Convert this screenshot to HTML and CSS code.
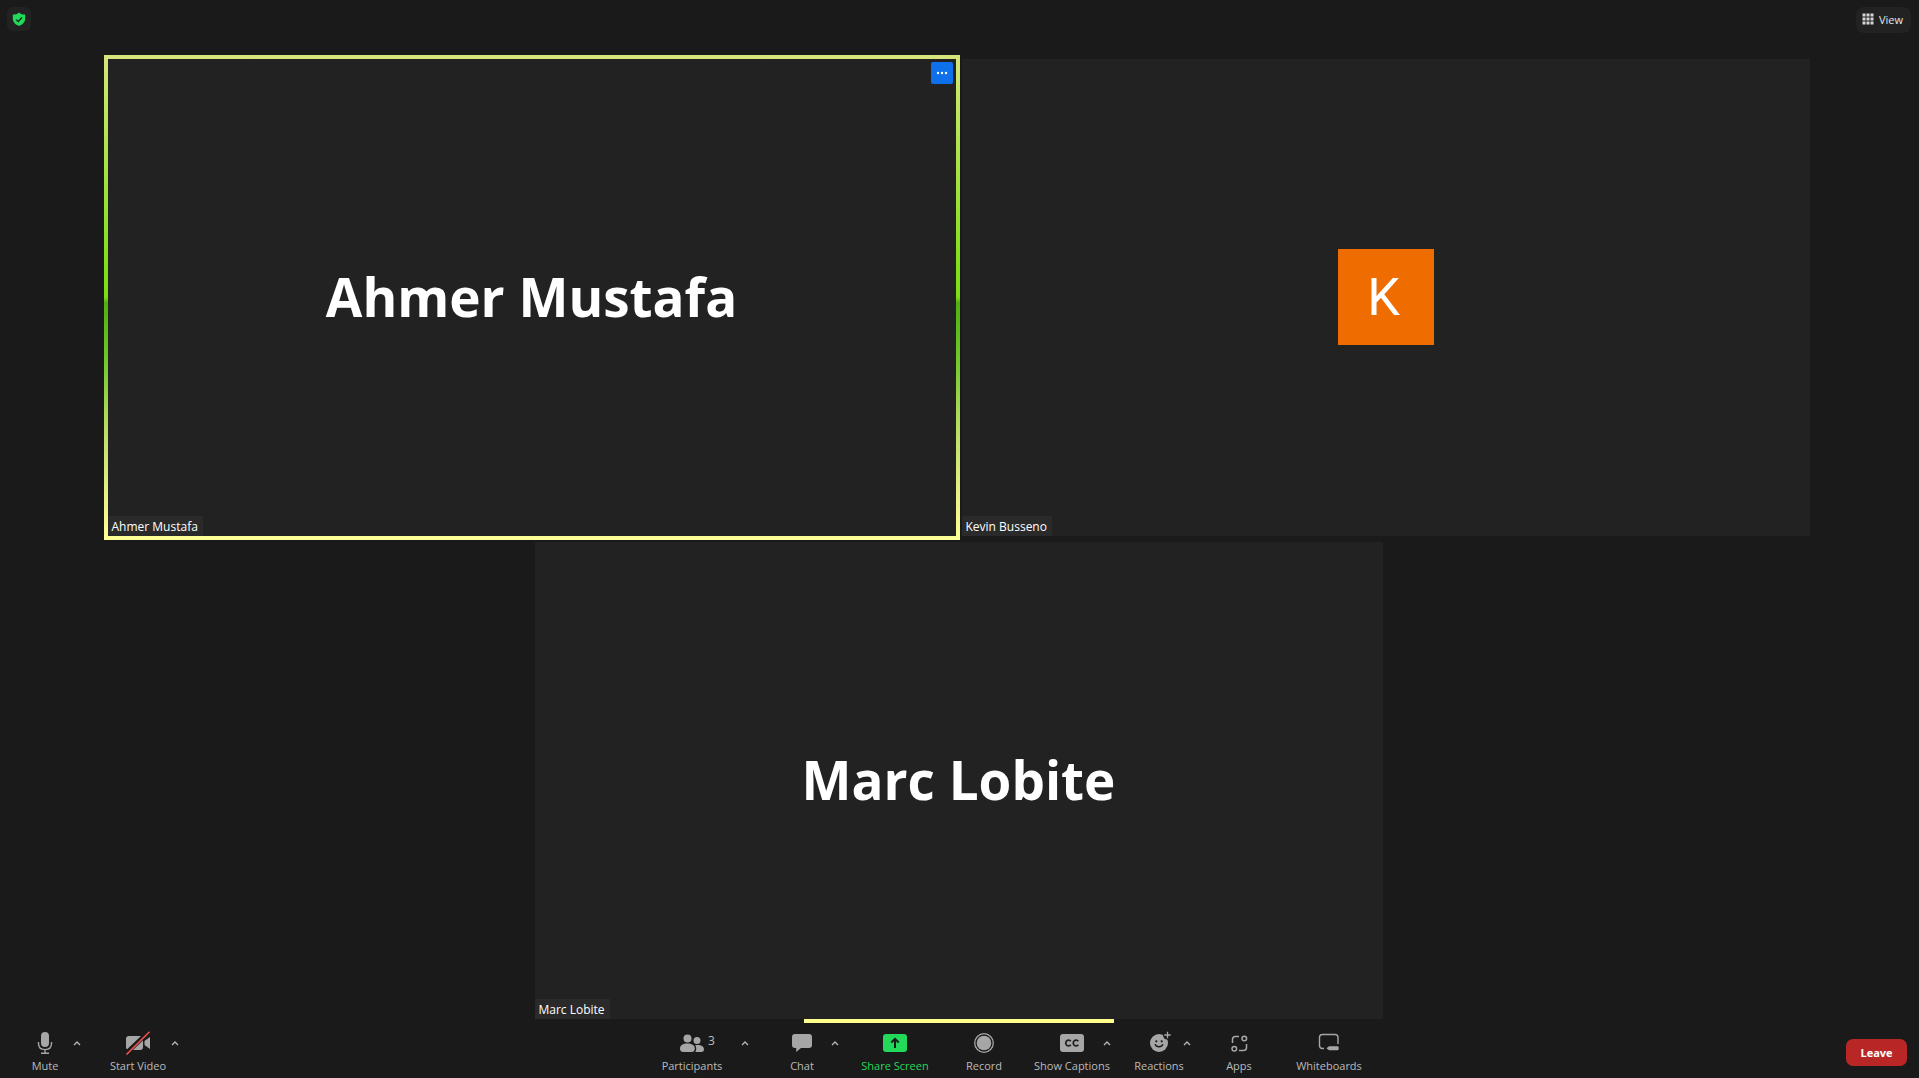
FILE: index.html
```html
<!DOCTYPE html>
<html lang="en">
<head>
<meta charset="utf-8">
<title>Zoom Meeting</title>
<link rel="stylesheet" href="styles.css">
</head>
<body>
<div class="meeting">
  <header class="topbar">
    <button class="shield" type="button" aria-label="Meeting information">
      <svg width="14" height="14" viewBox="0 0 14 14"><path d="M7 0.4C8.5 1.9 10.6 2.5 13.2 2.6V6.6C13.2 10.2 10.7 12.7 7 13.9C3.300 12.700.8 10.200.8 6.600V2.600C3.400 2.500 5.500 1.900 7 .4Z" fill="#23d959"/><path d="M4.200 7.600 6.200 9.500 10 5.500" fill="none" stroke="#1a2a1e" stroke-width="1.300"/></svg>
    </button>
    <button class="view" type="button">
      <svg width="12" height="12" viewBox="0 0 12 12" fill="#d6d6d6"><path d="M0.500 0.500h3v3h-3zM4.500.5h3v3h-3zM8.500.5h3v3h-3zM.5 4.500h3v3h-3zM4.500 4.500h3v3h-3zM8.500 4.500h3v3h-3zM.5 8.500h3v3h-3zM4.500 8.500h3v3h-3zM8.500 8.500h3v3h-3z"/></svg>
      View
    </button>
  </header>

  <main class="stage">
    <div class="row">
      <section class="tile speaking">
        <h2 class="name">Ahmer Mustafa</h2>
        <span class="tag">Ahmer Mustafa</span>
        <button class="more" type="button" aria-label="More options">
          <svg width="12" height="4" viewBox="0 0 12 4" fill="#fff"><circle cx="2" cy="2" r="1.200"/><circle cx="6" cy="2" r="1.200"/><circle cx="10" cy="2" r="1.200"/></svg>
        </button>
      </section>
      <section class="tile">
        <div class="avatar">K</div>
        <span class="tag">Kevin Busseno</span>
      </section>
    </div>
    <div class="row">
      <section class="tile">
        <h2 class="name">Marc Lobite</h2>
        <span class="tag">Marc Lobite</span>
      </section>
    </div>
  </main>

  <footer class="toolbar">
    <div class="group">
      <div class="item">
        <button class="tool mute" type="button">
          <svg width="24" height="24" viewBox="0 0 24 24"><rect x="8" y="1" width="8" height="15" rx="4" fill="#a6a6a6"/><path d="M5.500 11v1.500C5.500 16.500 8.300 18.600 12 18.600S18.500 16.500 18.500 12.500V11M12 18.600V22M8 22.300h8" fill="none" stroke="#a6a6a6" stroke-width="1.400"/></svg>
          <span>Mute</span>
        </button>
        <button class="caret" type="button" aria-label="Audio options"><svg width="8" height="6" viewBox="0 0 8 6"><path d="M1 5 4 2 7 5"/></svg></button>
      </div>
      <div class="item">
        <button class="tool video" type="button">
          <svg width="26" height="24" viewBox="0 0 26 24"><path d="M4 5h11a3 3 0 0 1 3 3v8a3 3 0 0 1-3 3H4a3 3 0 0 1-3-3V8a3 3 0 0 1 3-3zM19.500 10 25 6v12l-5.500-4z" fill="#a6a6a6"/><path d="M1 22.500 24 .5" stroke="#1a1a1a" stroke-width="4.500"/><path d="M1.500 23.500 24.500.8" stroke="#f2514f" stroke-width="1.600"/></svg>
          <span>Start Video</span>
        </button>
        <button class="caret" type="button" aria-label="Video options"><svg width="8" height="6" viewBox="0 0 8 6"><path d="M1 5 4 2 7 5"/></svg></button>
      </div>
    </div>

    <div class="group">
      <div class="item">
        <button class="tool participants" type="button">
          <svg width="24" height="24" viewBox="0 0 24 24" fill="#a6a6a6"><circle cx="7.500" cy="7.500" r="4"/><path d="M0 17.500C0 14.500 3 12.600 7.300 12.600S14.800 14.500 14.800 17.500C14.800 20 13.500 21 11.500 21H3.300C1.300 21 0 20 0 17.500z"/><circle cx="17" cy="9.500" r="3.500"/><path d="M15.200 14.200C20.500 13.300 24 15.200 24 18.300C24 20.200 23 21 21.500 21H15.300C16.600 19.300 16.600 16.300 15.200 14.200z"/></svg>
          <span class="count">3</span>
          <span>Participants</span>
        </button>
        <button class="caret" type="button" aria-label="Participant options"><svg width="8" height="6" viewBox="0 0 8 6"><path d="M1 5 4 2 7 5"/></svg></button>
      </div>
      <div class="item">
        <button class="tool chat" type="button">
          <svg width="24" height="24" viewBox="0 0 24 24"><path d="M5 3h14a3 3 0 0 1 3 3v8a3 3 0 0 1-3 3h-8l-4.800 4V17H5a3 3 0 0 1-3-3V6a3 3 0 0 1 3-3z" fill="#a6a6a6"/></svg>
          <span>Chat</span>
        </button>
        <button class="caret" type="button" aria-label="Chat options"><svg width="8" height="6" viewBox="0 0 8 6"><path d="M1 5 4 2 7 5"/></svg></button>
      </div>
      <div class="item">
        <button class="tool share" type="button">
          <svg width="24" height="24" viewBox="0 0 24 24"><rect y="3" width="24" height="18" rx="3" fill="#23d959"/><path d="M12 17V8.500M8.300 11.500 12 7.800l3.700 3.700" fill="none" stroke="#1a1a1a" stroke-width="2"/></svg>
          <span>Share Screen</span>
        </button>
      </div>
      <div class="item">
        <button class="tool record" type="button">
          <svg width="24" height="24" viewBox="0 0 24 24"><circle cx="12" cy="12" r="9.300" fill="none" stroke="#a6a6a6" stroke-width="1.300"/><circle cx="12" cy="12" r="7.300" fill="#a6a6a6"/></svg>
          <span>Record</span>
        </button>
      </div>
      <div class="item">
        <button class="tool captions" type="button">
          <svg width="24" height="24" viewBox="0 0 24 24"><rect y="3" width="24" height="18" rx="3" fill="#a6a6a6"/><path d="M10.800 10.300A2.800 2.800 0 1 0 10.800 13.700M18.300 10.300A2.800 2.800 0 1 0 18.300 13.700" fill="none" stroke="#222" stroke-width="1.800"/></svg>
          <span>Show Captions</span>
        </button>
        <button class="caret" type="button" aria-label="Caption options"><svg width="8" height="6" viewBox="0 0 8 6"><path d="M1 5 4 2 7 5"/></svg></button>
      </div>
      <div class="item">
        <button class="tool reactions" type="button">
          <svg width="24" height="24" viewBox="0 0 24 24"><circle cx="12" cy="12" r="9" fill="#a6a6a6"/><circle cx="20.500" cy="4" r="4.500" fill="#1a1a1a"/><path d="M20.500.8v6.400M17.300 4h6.400" stroke="#a6a6a6" stroke-width="1.300"/><circle cx="9.300" cy="10.300" r="1.100" fill="#1a1a1a"/><circle cx="14.700" cy="10.300" r="1.100" fill="#1a1a1a"/><path d="M8 13.300C9.500 16.600 14.500 16.600 16 13.300" fill="none" stroke="#1a1a1a" stroke-width="1.400"/></svg>
          <span>Reactions</span>
        </button>
        <button class="caret" type="button" aria-label="Reaction options"><svg width="8" height="6" viewBox="0 0 8 6"><path d="M1 5 4 2 7 5"/></svg></button>
      </div>
      <div class="item">
        <button class="tool apps" type="button">
          <svg width="24" height="24" viewBox="0 0 24 24" fill="none" stroke="#a6a6a6" stroke-width="1.500"><path d="M12 5.500H8.500a3 3 0 0 0-3 3V12M12 19.500h4.500a3 3 0 0 0 3-3V13"/><circle cx="17.300" cy="7.500" r="2.300"/><circle cx="7.300" cy="17.700" r="2.300"/></svg>
          <span>Apps</span>
        </button>
      </div>
      <div class="item">
        <button class="tool whiteboards" type="button">
          <svg width="24" height="24" viewBox="0 0 24 24"><path d="M7 17.500H5.500a3 3 0 0 1-3-3V6.500a3 3 0 0 1 3-3h12.500a3 3 0 0 1 3 3V13" fill="none" stroke="#a6a6a6" stroke-width="1.400"/><path d="M9.500 17.200 12 15.200h8.500a1.200 1.200 0 0 1 1.200 1.200v1.600a1.200 1.200 0 0 1-1.200 1.200H12z" fill="#a6a6a6"/></svg>
          <span>Whiteboards</span>
        </button>
      </div>
    </div>

    <div class="group end">
      <button class="leave" type="button">Leave</button>
    </div>
  </footer>
</div>
</body>
</html>
```
FILE: styles.css
```css
* {
  box-sizing: border-box;
}

body {
  margin: 0;
  background: #1a1a1a;
  color: #fff;
  font-family: "Open Sans", "Noto Sans", sans-serif;
  font-size: 12px;
}

button {
  margin: 0;
  padding: 0;
  border: 0;
  background: none;
  color: inherit;
  font: inherit;
}

svg {
  display: block;
  flex: none;
}

.meeting {
  display: flex;
  flex-direction: column;
  height: 100vh;
}

.topbar {
  display: flex;
  justify-content: space-between;
  align-items: flex-start;
  height: 59px;
  padding: 7px 8px 0 7px;
}

.shield {
  display: grid;
  place-items: center;
  width: 24px;
  height: 24px;
  border-radius: 6px;
  background: #222;
}

.view {
  display: flex;
  align-items: center;
  gap: 5px;
  height: 26px;
  padding: 0 8px 2px 6px;
  border-radius: 8px;
  background: #222;
  color: #e6e6e6;
  font-size: 11px;
}

/* Gallery of participants */
.stage {
  display: flex;
  flex: 1;
  flex-direction: column;
  gap: 6px;
  min-height: 0;
  padding-right: 2px;
}

.row {
  display: flex;
  flex: 1;
  justify-content: center;
  gap: 6px;
  min-height: 0;
}

.tile {
  position: relative;
  display: flex;
  align-items: center;
  justify-content: center;
  height: 100%;
  aspect-ratio: 16 / 9;
  background: #222;
}

.speaking::before {
  content: "";
  position: absolute;
  inset: -4px;
  border: 4px solid;
  border-image: linear-gradient(#d8e47c 0%, #c4e666 8%, #86e01e 40%, #7edc14 50%, #4fb010 51%, #6cc628 62%, #b4dc60 76%, #e6ee88 90%, #ffff96 100%) 4;
}

.name {
  margin: 0;
  padding-bottom: 2px;
  font-size: 53px;
  line-height: 76px;
  font-weight: 700;
  white-space: nowrap;
}

.avatar {
  display: grid;
  place-items: center;
  width: 96px;
  height: 96px;
  margin-bottom: 2px;
  padding: 2px 4px 0 0;
  background: #ef6c00;
  font-family: Roboto, sans-serif;
  font-size: 52px;
}

.tag {
  position: absolute;
  left: 0;
  bottom: 0;
  padding: 2px 5px 0 4px;
  background: #2a2a2a;
  line-height: 18px;
}

.more {
  position: absolute;
  top: 3px;
  right: 3px;
  display: grid;
  place-items: center;
  width: 22px;
  height: 22px;
  border-radius: 2px;
  background: #0e71eb;
}

/* Meeting controls */
.toolbar {
  position: relative;
  display: flex;
  justify-content: space-between;
  height: 59px;
  padding: 12px 12px 0 9px;
  color: #bababa;
  font-size: 11px;
}

.toolbar::before {
  content: "";
  position: absolute;
  top: 0;
  left: 50%;
  width: 310px;
  height: 4px;
  margin-left: -156px;
  background: #ffff8c;
}

.group {
  display: flex;
  align-items: flex-start;
  gap: 12px;
}

.end {
  justify-content: flex-end;
  min-width: 80px;
  padding-top: 8px;
}

.item {
  display: flex;
  align-items: flex-start;
}

.tool {
  position: relative;
  display: flex;
  flex-direction: column;
  align-items: center;
  gap: 3px;
  line-height: 16px;
  white-space: nowrap;
}

.mute { width: 72px; }
.video { width: 82px; }
.participants { width: 114px; }
.chat { width: 74px; }
.share { width: 80px; color: #23d959; }
.record { width: 74px; }
.captions { width: 78px; }
.reactions { width: 64px; }
.apps { width: 64px; }
.whiteboards { width: 92px; }

.count {
  position: absolute;
  top: 2px;
  left: 73px;
  font-size: 12px;
}

.caret {
  position: relative;
  display: grid;
  place-items: center;
  width: 16px;
  height: 24px;
  margin-left: -12px;
}

.caret path {
  fill: none;
  stroke: #b4b4b4;
  stroke-width: 1.4;
}

.leave {
  width: 61px;
  height: 27px;
  padding-bottom: 1px;
  border-radius: 7px;
  background: #b92626;
  color: #fff;
  font-weight: 700;
}
```
